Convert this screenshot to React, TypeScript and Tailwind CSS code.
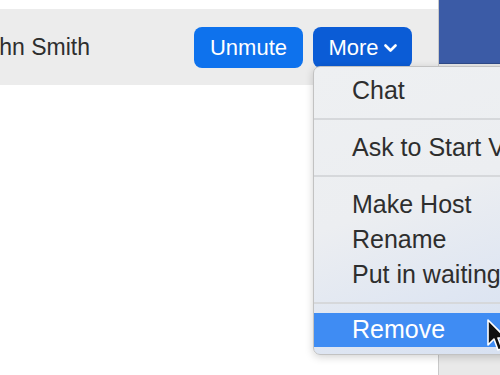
export default function App() {
  const font = { fontFamily: '"Liberation Sans", Arial, sans-serif' }
  return (
    <div className="relative h-[375px] w-[500px] overflow-hidden bg-white" style={font}>
      <div className="flex h-full">
        <div className="flex w-[438px] flex-col">
          <div className="h-[9px] bg-white" />
          <div className="flex h-[76px] items-center justify-between bg-[#ececec] pr-[26px]">
            <div className="ml-[-25px] text-[23px] text-[#2e2e2e]">John Smith</div>
            <div className="flex gap-[10px]">
              <div className="flex h-[41px] w-[109px] items-center justify-center rounded-[8px] bg-[#0e72ed] text-[22px] text-white">
                Unmute
              </div>
              <div className="flex h-[41px] w-[99px] items-center justify-center gap-[5px] rounded-[8px] bg-[#0b5cd6] text-[22px] text-white">
                More
                <svg width="13" height="9" viewBox="0 0 13 9" className="mt-[2px]">
                  <path d="M1.5 1.5 L6.5 6.5 L11.5 1.5" fill="none" stroke="white" strokeWidth="2.6" strokeLinecap="round" strokeLinejoin="round" />
                </svg>
              </div>
            </div>
          </div>
          <div className="flex-1 bg-white" />
        </div>
        <div className="flex flex-1 flex-col border-l border-[#c9c9c9]">
          <div className="h-[64px] border-b border-[#2f4a8a] bg-[#3b5ba6]" />
          <div className="flex-1 bg-[#e9e9e9]" />
        </div>
      </div>

      <div className="absolute left-[313px] top-[66px] flex h-[289px] w-[230px] flex-col rounded-[7px] border border-[#c2c2c2] bg-[linear-gradient(160deg,#eef0f2_0%,#eceef1_45%,#dfe6f2_75%,#d6e0f1_100%)] pt-[6px] text-[25px] text-[#2e2e2e] shadow-[0_2px_8px_rgba(0,0,0,0.18)]">
        <div className="flex h-[35px] items-center pl-[38px]">Chat</div>
        <div className="flex h-[22px] items-center">
          <div className="h-[2px] w-full bg-[#d6d8db]" />
        </div>
        <div className="flex h-[35px] items-center whitespace-nowrap pl-[38px]">Ask to Start Video</div>
        <div className="flex h-[22px] items-center">
          <div className="h-[2px] w-full bg-[#d6d8db]" />
        </div>
        <div className="flex h-[35px] items-center pl-[38px]">Make Host</div>
        <div className="flex h-[35px] items-center pl-[38px]">Rename</div>
        <div className="flex h-[35px] items-center whitespace-nowrap pl-[38px]">Put in waiting room</div>
        <div className="flex h-[21px] items-center">
          <div className="h-[2px] w-full bg-[#d6d8db]" />
        </div>
        <div className="flex h-[34px] items-center bg-[#3f8cf3] pl-[38px] text-white">Remove</div>
      </div>

      <svg className="absolute left-[486px] top-[319px]" width="20" height="36" viewBox="0 0 20 36">
        <path d="M2 1 L2 26 L8 20 L12 31 L16 29.5 L12 19 L20 19 Z" fill="#111" stroke="white" strokeWidth="1.6" strokeLinejoin="round" />
      </svg>
    </div>
  )
}
